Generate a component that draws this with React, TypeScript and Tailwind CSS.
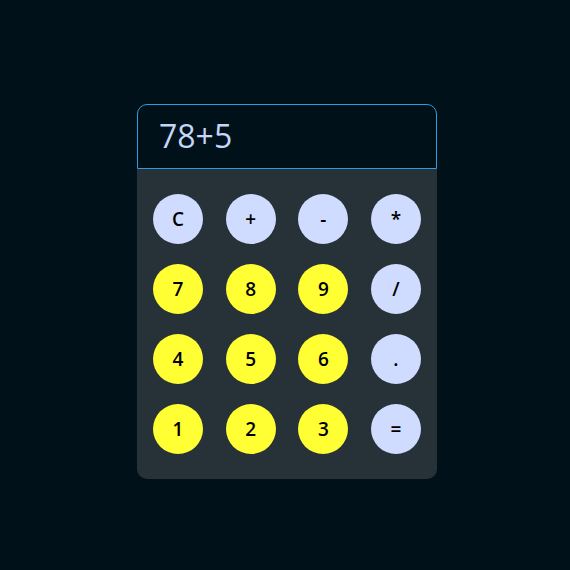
import React from "react";

const keys: { label: string; kind: "op" | "num" }[] = [
  { label: "C", kind: "op" },
  { label: "+", kind: "op" },
  { label: "-", kind: "op" },
  { label: "*", kind: "op" },
  { label: "7", kind: "num" },
  { label: "8", kind: "num" },
  { label: "9", kind: "num" },
  { label: "/", kind: "op" },
  { label: "4", kind: "num" },
  { label: "5", kind: "num" },
  { label: "6", kind: "num" },
  { label: ".", kind: "op" },
  { label: "1", kind: "num" },
  { label: "2", kind: "num" },
  { label: "3", kind: "num" },
  { label: "=", kind: "op" },
];

export default function App() {
  return (
    <div
      className="w-[570px] h-[570px] bg-[#00111a] flex pl-[137px] pt-[104px]"
      style={{ fontFamily: '"Open Sans", "Noto Sans", sans-serif' }}
    >
      <div className="w-[300px] h-[375px] flex flex-col">
        <div className="h-[65px] border border-[#2a9ee0] rounded-t-[10px] bg-[#00111a] flex items-center pl-[21px] pb-[1px]">
          <span className="text-[32px] text-[#c5d6f7] leading-none">78+5</span>
        </div>
        <div className="flex-1 bg-[#263238] rounded-b-[10px] px-4 pt-[25px] grid grid-cols-[50px_50px_50px_50px] justify-between content-start gap-y-5">
          {keys.map((k) => (
            <button
              key={k.label}
              className={`w-[50px] h-[50px] rounded-full flex items-center justify-center text-[19px] font-semibold text-black ${
                k.kind === "num" ? "bg-[#ffff33]" : "bg-[#d0dcff]"
              }`}
            >
              {k.label}
            </button>
          ))}
        </div>
      </div>
    </div>
  );
}
